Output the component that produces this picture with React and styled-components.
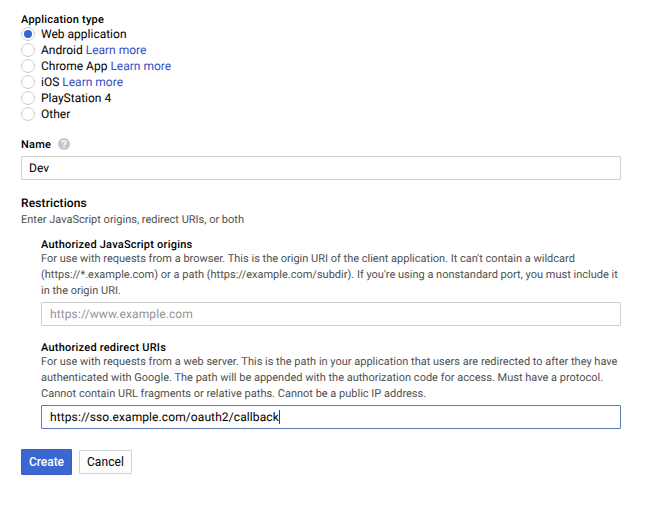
import React from "react";
import styled, { createGlobalStyle } from "styled-components";

const GlobalStyle = createGlobalStyle`
  * { box-sizing: border-box; }
  body {
    margin: 0;
    background: #fff;
    color: #000;
    font-family: Roboto, "Liberation Sans", sans-serif;
    font-size: 12px;
    text-rendering: geometricPrecision;
    -webkit-font-smoothing: antialiased;
  }
`;

const Form = styled.form`
  display: flex;
  flex-direction: column;
  width: 621px;
  padding: 12px 0 0 21px;
`;

const Heading = styled.div`
  display: flex;
  align-items: center;
  height: ${(p) => p.$height || 16}px;
  font-size: ${(p) => p.$size || 11}px;
  letter-spacing: ${(p) => p.$spacing || 0.22}px;
  font-weight: 500;
  white-space: nowrap;
`;

const RadioGroup = styled.div`
  display: flex;
  flex-direction: column;
`;

const RadioRow = styled.label`
  display: flex;
  align-items: center;
  height: 16px;
  white-space: pre;
`;

const Radio = styled.span`
  display: flex;
  align-items: center;
  justify-content: center;
  width: 14px;
  height: 14px;
  margin-right: 6px;
  border: 1px solid #d0d0d0;
  border-radius: 50%;

  &::after {
    content: "";
    width: 8px;
    height: 8px;
    border-radius: 50%;
    background: ${(p) => (p.$checked ? "#3367d6" : "transparent")};
  }
`;

const Link = styled.a`
  color: #3450c4;
  text-decoration: none;
`;

const NameHeading = styled(Heading)`
  margin: 14px 0 4px;
  gap: 7px;
`;

const Field = styled.div`
  display: flex;
  align-items: center;
  height: 24px;
  padding-left: ${(p) => p.$inset || 8}px;
  border: 1px solid ${(p) => (p.$focused ? "#6079b8" : "#cfcfcf")};
  border-radius: 1px;
  color: ${(p) => (p.$placeholder ? "#949494" : "#000")};
  letter-spacing: 0.1px;
  white-space: nowrap;
`;

const Caret = styled.span`
  width: 1px;
  height: 14px;
  background: #444;
`;

const RestrictionsHeading = styled(Heading)`
  margin-top: 15px;
`;

const Description = styled.div`
  padding-top: ${(p) => p.$top || 0}px;
  color: #505050;
  font-size: 11px;
  line-height: 16px;
  white-space: nowrap;
`;

const Restriction = styled.section`
  display: flex;
  flex-direction: column;
  margin: ${(p) => p.$top}px 0 0 20px;

  ${Field} {
    margin-top: 3px;
  }
`;

const Actions = styled.div`
  display: flex;
  align-items: center;
  gap: 7px;
  margin-top: 20px;
`;

const Button = styled.button`
  height: ${(p) => (p.$primary ? 26 : 24)}px;
  width: ${(p) => (p.$primary ? 51 : 53)}px;
  padding: 0;
  border: 1px solid ${(p) => (p.$primary ? "#3560c4" : "#d2d2d2")};
  border-radius: 1px;
  background: ${(p) => (p.$primary ? "#3b67d0" : "#fdfdfd")};
  color: ${(p) => (p.$primary ? "#fff" : "#000")};
  font-family: inherit;
  font-size: 12px;
  font-weight: ${(p) => (p.$primary ? 500 : 400)};
  letter-spacing: ${(p) => (p.$primary ? -0.05 : 0.1)}px;
`;

const types = [
  { label: "Web application", checked: true },
  { label: "Android", link: true },
  { label: "Chrome App", link: true },
  { label: "iOS", link: true },
  { label: "PlayStation 4" },
  { label: "Other" },
];

const HelpIcon = () => (
  <svg width="12" height="12" viewBox="0 0 12 12" aria-label="Help">
    <circle cx="6" cy="6" r="6" fill="#c6c6c6" />
    <path
      d="M4 4.7C4 3.4 4.9 2.6 6 2.6s2 .8 2 1.9C8 5.8 6.1 5.9 6.1 7.5"
      fill="none"
      stroke="#fff"
      strokeWidth="1.4"
    />
    <rect x="5.4" y="8.4" width="1.4" height="1.4" fill="#fff" />
  </svg>
);

export default function App() {
  return (
    <>
      <GlobalStyle />
      <Form>
        <Heading $height={14}>Application type</Heading>
        <RadioGroup>
          {types.map((t) => (
            <RadioRow key={t.label}>
              <Radio $checked={t.checked} />
              {t.label}
              {t.link && <> <Link>Learn more</Link></>}
            </RadioRow>
          ))}
        </RadioGroup>

        <NameHeading>
          Name
          <HelpIcon />
        </NameHeading>
        <Field $inset={7}>Dev</Field>

        <RestrictionsHeading $size={12} $spacing={0.12}>Restrictions</RestrictionsHeading>
        <Description $top={1}>Enter JavaScript origins, redirect URIs, or both</Description>

        <Restriction $top={10}>
          <Heading $height={13}>Authorized JavaScript origins</Heading>
          <Description>
            For use with requests from a browser. This is the origin URI of the client application. It can't contain a wildcard
            <br />
            (https://*.example.com) or a path (https://example.com/subdir). If you're using a nonstandard port, you must include it
            <br />
            in the origin URI.
          </Description>
          <Field $placeholder>https://www.example.com</Field>
        </Restriction>

        <Restriction $top={15}>
          <Heading $height={13}>Authorized redirect URIs</Heading>
          <Description>
            For use with requests from a web server. This is the path in your application that users are redirected to after they have
            <br />
            authenticated with Google. The path will be appended with the authorization code for access. Must have a protocol.
            <br />
            Cannot contain URL fragments or relative paths. Cannot be a public IP address.
          </Description>
          <Field $focused>
            https://sso.example.com/oauth2/callback
            <Caret />
          </Field>
        </Restriction>

        <Actions>
          <Button type="button" $primary>Create</Button>
          <Button type="button">Cancel</Button>
        </Actions>
      </Form>
    </>
  );
}
